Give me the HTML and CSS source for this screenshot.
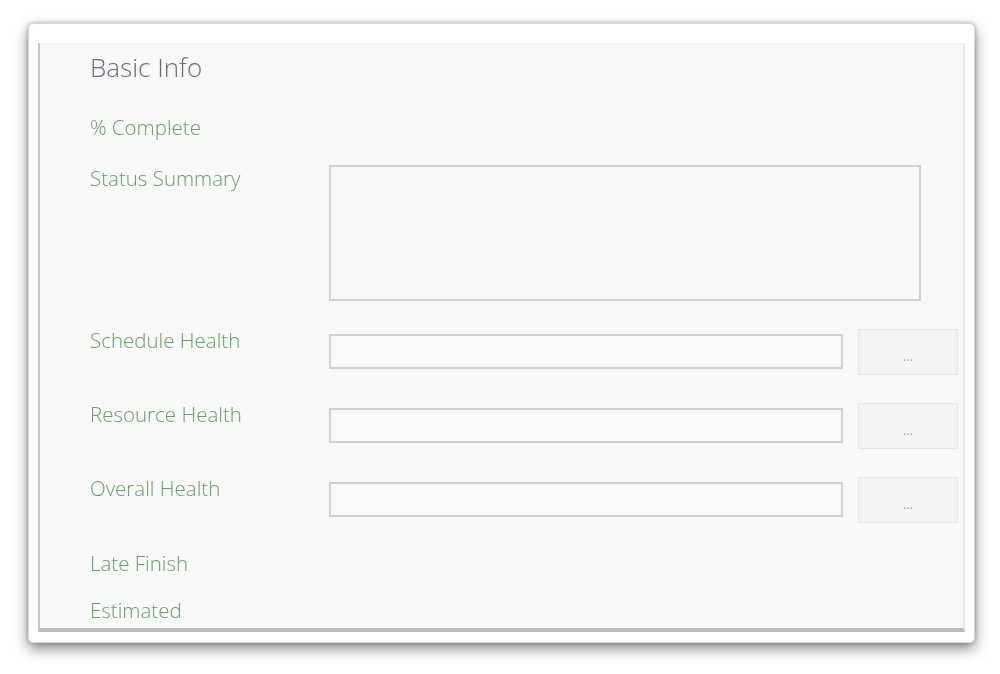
FILE: index.html
```html
<!DOCTYPE html>
<html lang="en">
<head>
    <meta charset="UTF-8">
    <title>Basic Info</title>
    <link rel="stylesheet" href="styles.css">
</head>
<body>
    <div class="frame">
        <div class="panel">
            <h1 class="title">Basic Info</h1>

            <div class="row row-complete">
                <span class="label">% Complete</span>
            </div>

            <div class="row row-summary">
                <span class="label">Status Summary</span>
                <textarea class="summary"></textarea>
            </div>

            <div class="row row-health">
                <span class="label">Schedule Health</span>
                <input type="text" class="field">
                <button class="pick">...</button>
            </div>

            <div class="row row-health">
                <span class="label">Resource Health</span>
                <input type="text" class="field">
                <button class="pick">...</button>
            </div>

            <div class="row row-health">
                <span class="label">Overall Health</span>
                <input type="text" class="field">
                <button class="pick">...</button>
            </div>

            <div class="row row-late">
                <span class="label">Late Finish</span>
            </div>

            <div class="row row-estimated">
                <span class="label">Estimated</span>
            </div>
        </div>
    </div>
</body>
</html>
```

FILE: styles.css
```css
* {
    box-sizing: border-box;
}
body {
    margin: 0;
    min-height: 674px;
    background: #fff;
    font-family: "Open Sans", "Noto Sans", sans-serif;
}
.frame {
    width: 947px;
    height: 620px;
    margin: 23px 0 0 28px;
    padding: 19px 9px 10px 9px;
    background: #fff;
    border: 1px solid #d8d8d8;
    border-radius: 5px;
    box-shadow: 0 0 4px rgba(0, 0, 0, 0.25), 0 6px 14px rgba(0, 0, 0, 0.45);
}
.panel {
    height: 100%;
    padding: 7px 0 0 50px;
    background: #f8f8f8;
    border-left: 2px solid #c6c6c6;
    border-top: 1px solid #ececec;
    border-right: 2px solid #e8e8e8;
    border-bottom: 4px solid #bcbcbc;
    display: flex;
    flex-direction: column;
    filter: blur(0.6px);
}
.title {
    margin: 0;
    font-size: 26px;
    font-weight: 300;
    line-height: 32px;
    color: #6c6c76;
}
.row {
    display: flex;
    align-items: flex-start;
}
.label {
    width: 239px;
    flex: none;
    font-size: 20.5px;
    font-weight: 300;
    line-height: 24px;
    color: #6f986f;
}
.row-complete {
    margin-top: 32px;
}
.row-summary {
    margin-top: 26px;
}
.row-summary .label {
    margin-top: 1px;
}
.summary {
    width: 592px;
    height: 136px;
    margin: 0;
    background: #f8f8f8;
    border: 2px solid #d0d0d0;
    resize: none;
}
.row-health {
    margin-top: 28px;
}
.row-health .label {
    margin-top: -1px;
}
.field {
    width: 514px;
    height: 35px;
    margin: 5px 15px 0 0;
    background: #f9f9f9;
    border: 2px solid #d0d0d0;
}
.pick {
    width: 100px;
    height: 46px;
    padding-top: 8px;
    background: #f4f4f4;
    border: 1px solid #e6e6e6;
    color: #a8a8a8;
    font-size: 13px;
    font-family: "Open Sans", sans-serif;
}
.row-late {
    margin-top: 28px;
}
.row-estimated {
    margin-top: 23px;
}
```
